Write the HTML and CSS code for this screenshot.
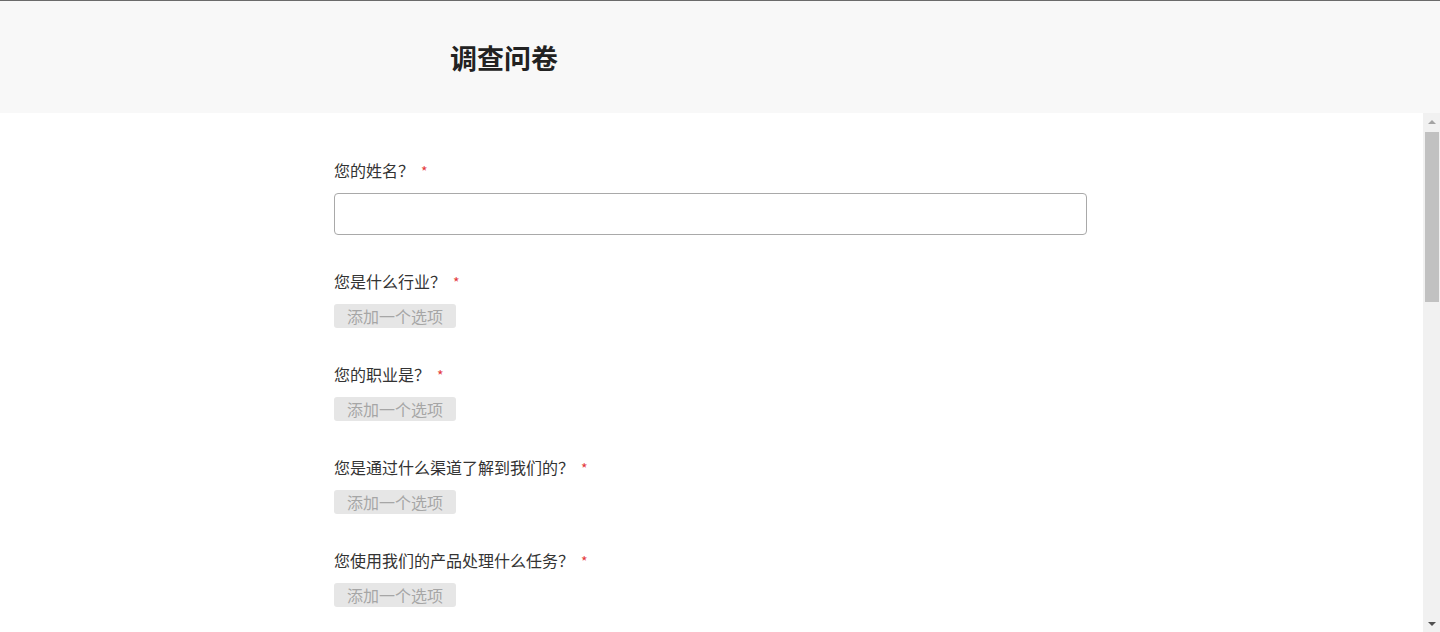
FILE: index.html
```html
<!DOCTYPE html>
<html lang="zh-CN">

<head>
    <meta charset="UTF-8">
    <meta name="viewport" content="width=device-width, initial-scale=1.0">
    <title>调查问卷</title>
    <link rel="stylesheet" href="styles.css">
</head>

<body>

    <header class="top">
        <div class="top-inner">
            <h1 class="title">调查问卷</h1>
        </div>
    </header>

    <div class="body-wrap">
        <main class="scroll">
            <form class="survey">

                <div class="question">
                    <label class="q-label" for="name">您的姓名？<span class="star">*</span></label>
                    <input type="text" id="name" class="q-input">
                </div>

                <div class="question">
                    <div class="q-label">您是什么行业？<span class="star">*</span></div>
                    <button type="button" class="add-btn" disabled>添加一个选项</button>
                </div>

                <div class="question">
                    <div class="q-label">您的职业是？<span class="star">*</span></div>
                    <button type="button" class="add-btn" disabled>添加一个选项</button>
                </div>

                <div class="question">
                    <div class="q-label">您是通过什么渠道了解到我们的？<span class="star">*</span></div>
                    <button type="button" class="add-btn" disabled>添加一个选项</button>
                </div>

                <div class="question">
                    <div class="q-label">您使用我们的产品处理什么任务？<span class="star">*</span></div>
                    <button type="button" class="add-btn" disabled>添加一个选项</button>
                </div>

                <div class="question">
                    <div class="q-label">您使用我们的产品多长时间了？<span class="star">*</span></div>
                    <button type="button" class="add-btn" disabled>添加一个选项</button>
                </div>

                <div class="question">
                    <div class="q-label">您多久使用一次我们的产品？<span class="star">*</span></div>
                    <button type="button" class="add-btn" disabled>添加一个选项</button>
                </div>

                <div class="question">
                    <div class="q-label">您最常用的功能是哪些？<span class="star">*</span></div>
                    <button type="button" class="add-btn" disabled>添加一个选项</button>
                </div>

                <div class="question">
                    <div class="q-label">您对产品的整体满意度如何？<span class="star">*</span></div>
                    <button type="button" class="add-btn" disabled>添加一个选项</button>
                </div>

                <div class="question">
                    <div class="q-label">您是否会向朋友推荐我们的产品？<span class="star">*</span></div>
                    <button type="button" class="add-btn" disabled>添加一个选项</button>
                </div>

            </form>
        </main>

        <!-- scroll rail, drawn by hand so it shows in every browser -->
        <aside class="rail">
            <span class="rail-btn rail-up"></span>
            <span class="rail-track"><span class="rail-thumb"></span></span>
            <span class="rail-btn rail-down"></span>
        </aside>
    </div>

</body>

</html>
```

FILE: styles.css
```css
html, body {
    height: 100%;
}

body {
    margin: 0;
    display: flex;
    flex-direction: column;
    border-top: 1px solid #6b6b6b;
    box-sizing: border-box;
    font-family: "Microsoft YaHei", "Noto Sans CJK SC", "Noto Sans", sans-serif;
    color: #333;
    overflow: hidden;
}

.top {
    flex: 0 0 112px;
    background-color: #f8f8f8;
}

.top-inner {
    width: 540px;
    height: 100%;
    margin: 0 auto;
    display: flex;
    align-items: center;
}

.title {
    margin: 0;
    padding-top: 2px;
    font-size: 27px;
    font-weight: bold;
    color: #222;
    line-height: 36px;
}

.body-wrap {
    flex: 1;
    display: flex;
    min-height: 0;
}

.scroll {
    flex: 1;
    overflow: hidden;
    background: #fff;
}

.survey {
    width: 755px;
    margin: 0 auto;
    padding: 47px 0 60px;
}

.question {
    margin-bottom: 36px;
}

.q-label {
    display: block;
    font-size: 16px;
    line-height: 20px;
    margin-bottom: 12px;
    color: #333;
}

.star {
    color: #e4393c;
    margin-left: 7px;
    font-size: 14px;
}

.q-input {
    display: block;
    width: 753px;
    height: 42px;
    box-sizing: border-box;
    border: 1px solid #a9a9a9;
    border-radius: 4px;
    padding: 0 10px;
    font-size: 14px;
    outline: none;
}

.add-btn {
    display: block;
    height: 24px;
    padding: 0 13px;
    border: none;
    border-radius: 3px;
    background-color: #e6e6e6;
    color: #a6a6a6;
    font-family: inherit;
    font-size: 16px;
    line-height: 24px;
}

.rail {
    flex: 0 0 17px;
    display: flex;
    flex-direction: column;
    background: #f1f1f1;
}

.rail-btn {
    flex: 0 0 17px;
    display: flex;
    align-items: center;
    justify-content: center;
}

.rail-up::before {
    content: "";
    border-left: 4px solid transparent;
    border-right: 4px solid transparent;
    border-bottom: 4px solid #a3a3a3;
}

.rail-down::before {
    content: "";
    border-left: 4px solid transparent;
    border-right: 4px solid transparent;
    border-top: 4px solid #505050;
}

.rail-track {
    flex: 1;
    padding: 2px 1px 0 2px;
}

.rail-thumb {
    display: block;
    height: 170px;
    background: #c1c1c1;
}
```
